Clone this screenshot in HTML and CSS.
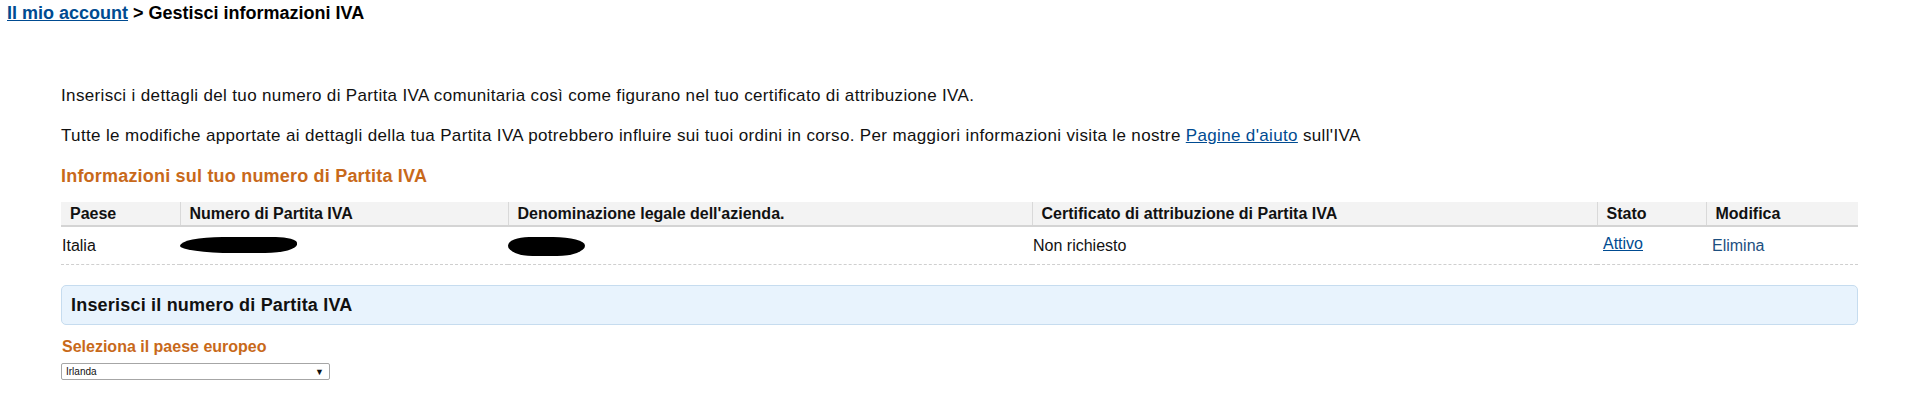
FILE: index.html
```html
<!DOCTYPE html>
<html lang="it">
<head>
<meta charset="utf-8">
<title>Gestisci informazioni IVA</title>
<link rel="stylesheet" href="styles.css">
</head>
<body>
<div class="breadcrumb"><a href="#" class="crumb-link">Il mio account</a> &gt; Gestisci informazioni IVA</div>
<main class="main">
  <p class="intro first">Inserisci i dettagli del tuo numero di Partita IVA comunitaria così come figurano nel tuo certificato di attribuzione IVA.</p>
  <p class="intro">Tutte le modifiche apportate ai dettagli della tua Partita IVA potrebbero influire sui tuoi ordini in corso. Per maggiori informazioni visita le nostre <a href="#" class="link">Pagine d'aiuto</a> sull'IVA</p>
  <h2 class="section-title">Informazioni sul tuo numero di Partita IVA</h2>
  <table class="vat-table">
    <colgroup>
      <col class="c1"><col class="c2"><col class="c3"><col class="c4"><col class="c5"><col class="c6">
    </colgroup>
    <thead>
      <tr>
        <th>Paese</th>
        <th>Numero di Partita IVA</th>
        <th>Denominazione legale dell'azienda.</th>
        <th>Certificato di attribuzione di Partita IVA</th>
        <th>Stato</th>
        <th>Modifica</th>
      </tr>
    </thead>
    <tbody>
      <tr>
        <td class="td-country">Italia</td>
        <td class="td-redact"><span class="redact redact-a"></span></td>
        <td class="td-redact"><span class="redact redact-b"></span></td>
        <td class="td-plain">Non richiesto</td>
        <td class="td-state"><a href="#" class="link">Attivo</a></td>
        <td class="td-edit"><a href="#" class="plain-link">Elimina</a></td>
      </tr>
    </tbody>
  </table>
  <div class="box">Inserisci il numero di Partita IVA</div>
  <div class="field-label">Seleziona il paese europeo</div>
  <div class="select"><span>Irlanda</span><span class="arrow">&#9660;</span></div>
</main>
</body>
</html>
```
FILE: styles.css
```css
html, body {
  margin: 0;
  padding: 0;
  background: #fff;
  font-family: "Liberation Sans", Arial, sans-serif;
  color: #000;
}
a { color: #004b91; }
.breadcrumb {
  padding: 0 7px;
  height: 24px;
  line-height: 26px;
  font-size: 18px;
  font-weight: bold;
}
.crumb-link { color: #004b91; text-decoration: underline; }
.main {
  padding: 0 59px 0 61px;
}
.intro {
  margin: 20px 0 0;
  font-size: 17px;
  letter-spacing: 0.35px;
  line-height: 20px;
  color: #111;
}
.intro.first { margin-top: 62px; }
.link { color: #004b91; text-decoration: underline; }
.plain-link { color: #1d4f80; text-decoration: none; }
.section-title {
  margin: 20px 0 0;
  font-size: 18px;
  letter-spacing: 0.2px;
  line-height: 20px;
  font-weight: bold;
  color: #c8691a;
}
.vat-table {
  margin-top: 16px;
  width: 1797px;
  border-collapse: collapse;
  table-layout: fixed;
}
.c1 { width: 119px; }
.c2 { width: 328px; }
.c3 { width: 524px; }
.c4 { width: 565px; }
.c5 { width: 109px; }
.c6 { width: 152px; }
.vat-table th {
  background: #f3f3f3;
  border-bottom: 2px solid #d4d4d4;
  border-left: 1px solid #d9d9d9;
  height: 23px;
  padding: 0 0 0 9px;
  text-align: left;
  font-size: 16px;
  font-weight: bold;
  color: #111;
}
.vat-table th:first-child { border-left: none; }
.vat-table td {
  height: 33px;
  padding: 0;
  border-bottom: 1px dashed #cfcfcf;
  font-size: 16px;
  color: #111;
  vertical-align: middle;
}
.vat-table td.td-country { padding-left: 1px; }
.vat-table td.td-plain { padding-left: 1px; }
.vat-table td.td-state { padding-left: 6px; padding-bottom: 4px; }
.vat-table td.td-edit { padding-left: 6px; }
.redact {
  display: inline-block;
  background: #000;
  vertical-align: middle;
}
.redact-a {
  width: 117px;
  height: 16px;
  border-radius: 40% 20% 30% 50% / 60% 40% 60% 50%;
  margin-top: -3px;
}
.redact-b {
  width: 77px;
  height: 19px;
  border-radius: 30% 45% 40% 35% / 50% 50% 60% 60%;
  margin-top: 1px;
}
.box {
  margin-top: 20px;
  width: 1797px;
  box-sizing: border-box;
  height: 40px;
  line-height: 38px;
  padding-left: 9px;
  background: #e8f3fd;
  border: 1px solid #c6dcef;
  border-radius: 5px;
  font-size: 18px;
  letter-spacing: 0.2px;
  font-weight: bold;
  color: #111;
}
.field-label {
  margin-top: 12px;
  padding-left: 1px;
  font-size: 16px;
  line-height: 20px;
  font-weight: bold;
  color: #c8691a;
}
.select {
  margin-top: 6px;
  width: 269px;
  height: 17px;
  box-sizing: border-box;
  border: 1px solid #a6a6a6;
  border-radius: 2px;
  display: flex;
  align-items: center;
  justify-content: space-between;
  padding: 0 5px 0 4px;
  font-size: 10px;
  color: #111;
}
.select .arrow { font-size: 9px; }
```
